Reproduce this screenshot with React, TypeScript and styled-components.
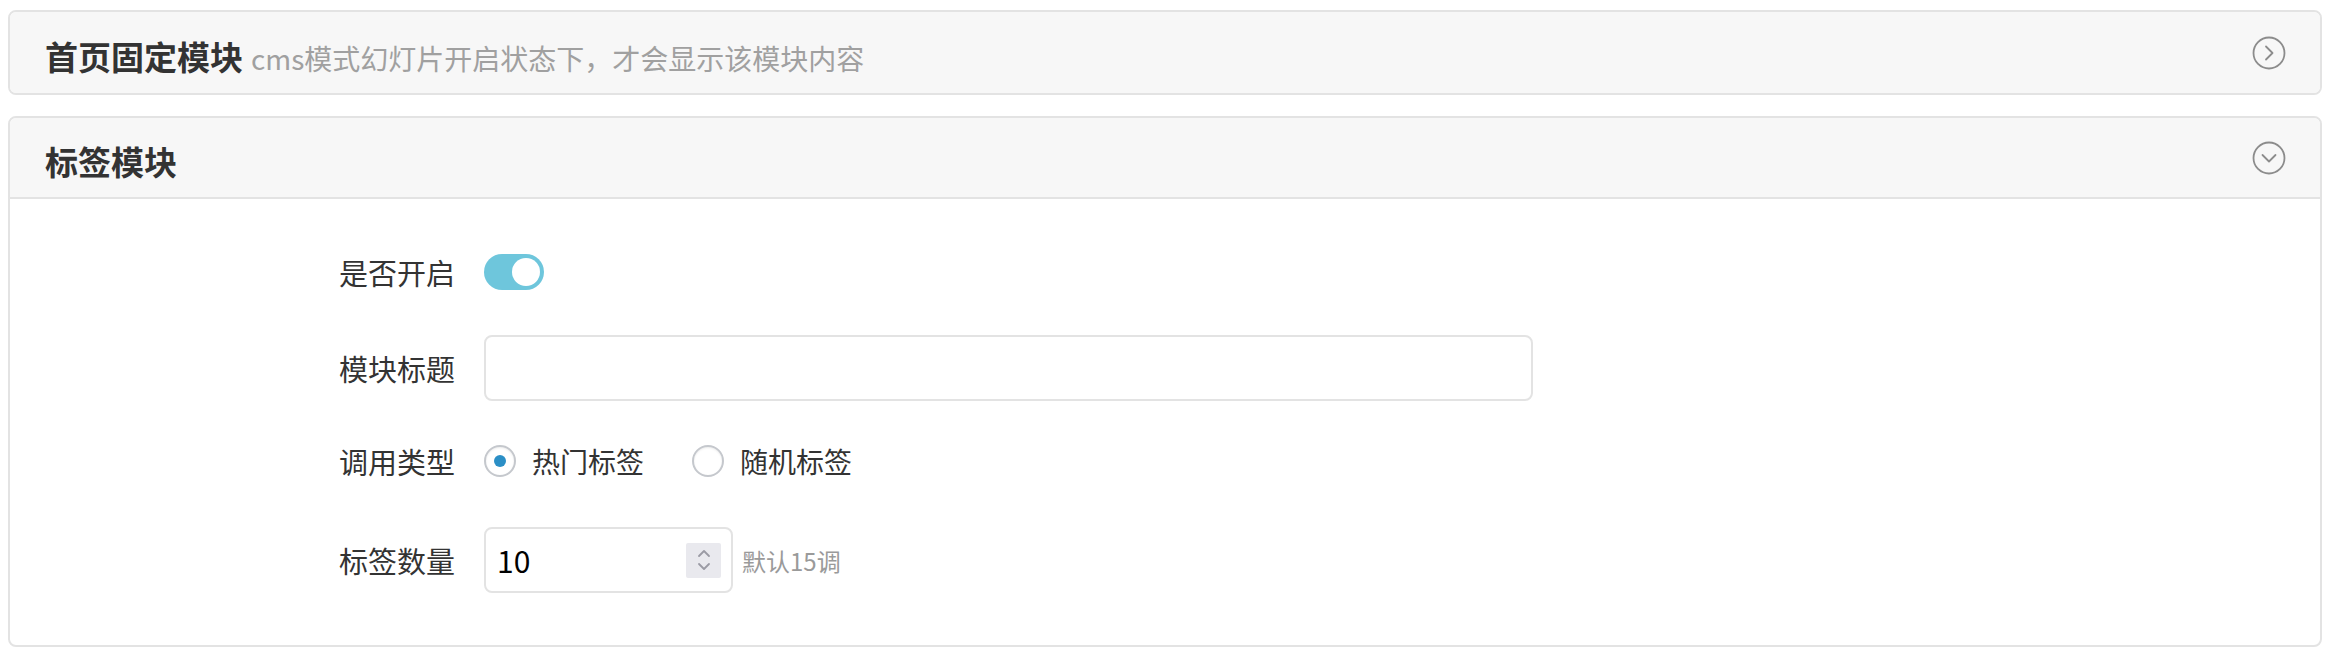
import React from "react";
import styled, { createGlobalStyle } from "styled-components";

const GlobalStyle = createGlobalStyle`
  * { box-sizing: border-box; }
  body {
    margin: 0;
    background: #ffffff;
    font-family: "Noto Sans CJK SC", "Noto Sans", sans-serif;
    color: #333;
  }
`;

const Page = styled.div`
  padding: 10px 8px;
`;

const Panel = styled.section`
  border: 2px solid #e3e3e3;
  border-radius: 8px;
  background: #fff;
  overflow: hidden;
  & + & {
    margin-top: 21px;
  }
`;

const PanelHeader = styled.div<{ $open?: boolean }>`
  height: 81px;
  background: #f7f7f7;
  display: flex;
  align-items: center;
  padding: 0 34px 0 35px;
  border-bottom: ${(p) => (p.$open ? "2px solid #e3e3e3" : "none")};
`;

const HeaderText = styled.div`
  flex: 1;
  display: flex;
  align-items: baseline;
  padding-top: 6px;
`;

const Title = styled.span`
  font-size: 33px;
  font-weight: 700;
  color: #333;
`;

const Subtitle = styled.span`
  font-size: 28px;
  color: #a0a0a0;
  margin-left: 8px;
`;

const PanelBody = styled.div`
  padding: 40px 0 52px 0;
`;

const FormRow = styled.div<{ $mt?: number }>`
  display: flex;
  align-items: center;
  height: 66px;
  margin-top: ${(p) => p.$mt ?? 0}px;
`;

const Label = styled.label`
  width: 445px;
  flex: none;
  text-align: right;
  font-size: 29px;
  color: #333;
  margin-right: 29px;
`;

const Toggle = styled.div<{ $on?: boolean }>`
  width: 60px;
  height: 36px;
  border-radius: 18px;
  background: ${(p) => (p.$on ? "#6ec6dc" : "#d8d8d8")};
  display: flex;
  align-items: center;
  justify-content: ${(p) => (p.$on ? "flex-end" : "flex-start")};
  padding: 0 4px;
`;

const Knob = styled.span`
  width: 28px;
  height: 28px;
  border-radius: 50%;
  background: #fff;
`;

const TextInput = styled.input`
  width: 1049px;
  height: 66px;
  border: 2px solid #e3e3e3;
  border-radius: 8px;
  outline: none;
  padding: 0 12px;
  font-size: 28px;
  font-family: inherit;
  background: #fff;
`;

const RadioOption = styled.label`
  display: flex;
  align-items: center;
  margin-right: 48px;
  font-size: 28px;
  color: #333;
`;

const RadioCircle = styled.span<{ $checked?: boolean }>`
  width: 32px;
  height: 32px;
  border-radius: 50%;
  border: 2px solid #c5c8cd;
  background: #fff;
  box-shadow: inset 0 1px 2px rgba(0, 0, 0, 0.08);
  display: flex;
  align-items: center;
  justify-content: center;
  margin-right: 16px;
  &::after {
    content: "";
    width: 12px;
    height: 12px;
    border-radius: 50%;
    background: ${(p) => (p.$checked ? "#2b8fc6" : "transparent")};
  }
`;

const NumberBox = styled.div`
  width: 249px;
  height: 66px;
  border: 2px solid #e3e3e3;
  border-radius: 8px;
  display: flex;
  align-items: center;
  padding: 0 10px 0 11px;
`;

const NumberValue = styled.span`
  flex: 1;
  font-size: 30px;
  color: #000;
`;

const Spinner = styled.span`
  width: 35px;
  height: 35px;
  background: #e9e9ee;
  border-radius: 2px;
  display: flex;
  align-items: center;
  justify-content: center;
`;

const Hint = styled.span`
  font-size: 24px;
  color: #9a9a9a;
  margin-left: 9px;
`;

const CircleChevron = ({ dir }: { dir: "right" | "down" }) => (
  <svg width="34" height="34" viewBox="0 0 34 34" fill="none">
    <circle cx="17" cy="17" r="15.5" stroke="#8c8c8c" strokeWidth="1.8" />
    {dir === "right" ? (
      <path d="M14 10.5 L20.5 17 L14 23.5" stroke="#8c8c8c" strokeWidth="1.8" strokeLinecap="round" strokeLinejoin="round" />
    ) : (
      <path d="M10.5 14 L17 20.5 L23.5 14" stroke="#8c8c8c" strokeWidth="1.8" strokeLinecap="round" strokeLinejoin="round" />
    )}
  </svg>
);

const SpinIcon = () => (
  <svg width="16" height="26" viewBox="0 0 16 26" fill="none">
    <path d="M3 9 L8 4 L13 9" stroke="#9a9aa4" strokeWidth="1.8" strokeLinecap="round" strokeLinejoin="round" />
    <path d="M3 17 L8 22 L13 17" stroke="#9a9aa4" strokeWidth="1.8" strokeLinecap="round" strokeLinejoin="round" />
  </svg>
);

export default function App() {
  return (
    <>
      <GlobalStyle />
      <Page>
        <Panel>
          <PanelHeader>
            <HeaderText>
              <Title>首页固定模块</Title>
              <Subtitle>cms模式幻灯片开启状态下，才会显示该模块内容</Subtitle>
            </HeaderText>
            <CircleChevron dir="right" />
          </PanelHeader>
        </Panel>
        <Panel>
          <PanelHeader $open>
            <HeaderText>
              <Title>标签模块</Title>
            </HeaderText>
            <CircleChevron dir="down" />
          </PanelHeader>
          <PanelBody>
            <FormRow>
              <Label>是否开启</Label>
              <Toggle $on>
                <Knob />
              </Toggle>
            </FormRow>
            <FormRow $mt={30}>
              <Label>模块标题</Label>
              <TextInput type="text" />
            </FormRow>
            <FormRow $mt={27}>
              <Label>调用类型</Label>
              <RadioOption>
                <RadioCircle $checked />
                热门标签
              </RadioOption>
              <RadioOption>
                <RadioCircle />
                随机标签
              </RadioOption>
            </FormRow>
            <FormRow $mt={33}>
              <Label>标签数量</Label>
              <NumberBox>
                <NumberValue>10</NumberValue>
                <Spinner>
                  <SpinIcon />
                </Spinner>
              </NumberBox>
              <Hint>默认15调</Hint>
            </FormRow>
          </PanelBody>
        </Panel>
      </Page>
    </>
  );
}
